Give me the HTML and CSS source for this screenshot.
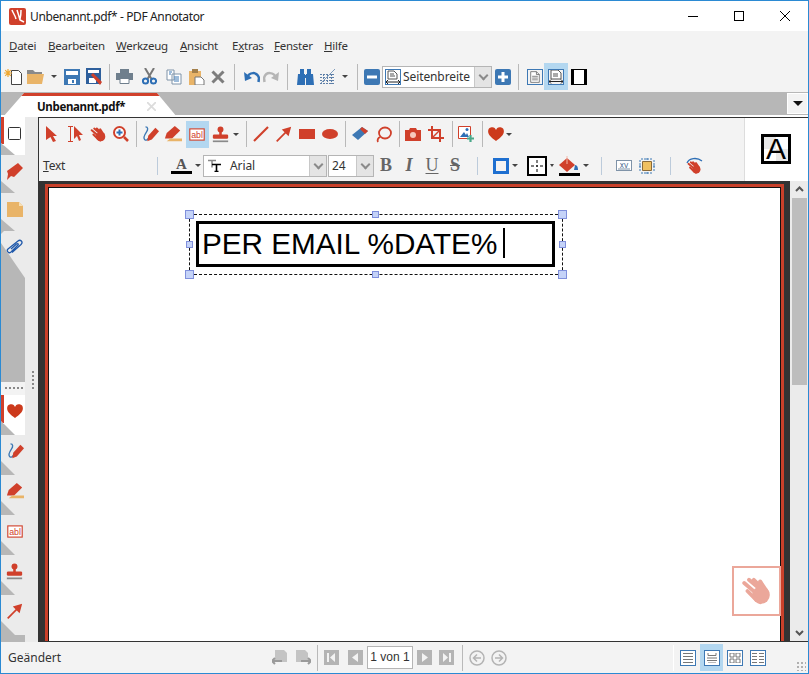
FILE: index.html
```html
<!DOCTYPE html>
<html lang="de">
<head>
  <meta charset="UTF-8">
  <title>Unbenannt.pdf* - PDF Annotator</title>
  <link rel="stylesheet" href="styles.css">
</head>
<body>
  <!-- Icons die mehrfach vorkommen -->
  <svg class="sprite" xmlns="http://www.w3.org/2000/svg">
    <symbol id="hand" viewBox="0 0 20 20">
      <g fill="none" stroke="currentColor" stroke-width="2.4" stroke-linecap="round">
        <path d="M2 5l7 6M5 3l7 6M8 3l6 6M12 4l4 6"/>
      </g>
      <circle cx="12.5" cy="12.5" r="5.5" fill="currentColor"/>
      <path d="M4 10l5 5 3 2" fill="none" stroke="currentColor" stroke-width="2.4" stroke-linecap="round"/>
    </symbol>
    <symbol id="pen" viewBox="0 0 20 20">
      <path d="M5 2c3 0 3 3 1 6s-4 6-2 8 3 0 4-1" fill="none" stroke="#3d78b4" stroke-width="1.5"/>
      <path d="M7 18l1-6 8-9 4 4-8 9z" fill="#d0402b"/>
    </symbol>
    <symbol id="marker" viewBox="0 0 20 20">
      <path d="M1 15l2-6 9-8 6 5-9 9z" fill="#d0402b"/>
      <path d="M7 15h13v3H3z" fill="#e9b468"/>
    </symbol>
    <symbol id="textbox" viewBox="0 0 20 16">
      <rect x="1" y="1" width="18" height="14" fill="#fff" stroke="#d0402b" stroke-width="1.4"/>
      <text x="10" y="12" text-anchor="middle" font-family="Liberation Sans, sans-serif" font-size="11" fill="#d0402b">abl</text>
    </symbol>
    <symbol id="stamp" viewBox="0 0 20 20">
      <circle cx="10" cy="4" r="3.500" fill="#d0402b"/>
      <path d="M8.500 6h3v5h-3z" fill="#d0402b"/>
      <rect x="1" y="10" width="18" height="5" rx="1.500" fill="#d0402b"/>
      <path d="M1 17h18v2H1z" fill="#8a8a8a"/>
    </symbol>
    <symbol id="arrowline" viewBox="0 0 20 20">
      <path d="M2 18L14 6" stroke="#d0402b" stroke-width="2"/>
      <path d="M19 1l-3 11-8-8z" fill="#d0402b"/>
    </symbol>
    <symbol id="heart" viewBox="0 0 18 16">
      <path d="M9 16C4 12 0 9 0 5a4.600 4.600 0 0 1 9-1.500A4.600 4.600 0 0 1 18 5c0 4-4 7-9 11z" fill="#cc3a1c"/>
    </symbol>
    <symbol id="pagelines" viewBox="0 0 14 16">
      <path d="M1 .5h8l4 4v11H1z" fill="#fff" stroke="#555"/>
      <path d="M9 .5v4h4M3 7h8M3 9.500h8M3 12h8" fill="none" stroke="#555"/>
    </symbol>
  </svg>

  <div class="window">
    <header class="titlebar">
      <svg class="applogo" width="17" height="17" viewBox="0 0 17 17">
        <rect width="17" height="17" rx="2" fill="#d0402b"/>
        <path d="M3 2c1 3 3 5 4 9M8 2c1 3 2 6 3 10l4 2M12 2c0 3 0 6-1 9" fill="none" stroke="#fff" stroke-width="1.500"/>
      </svg>
      <span class="apptitle">Unbenannt.pdf* - PDF Annotator</span>
      <div class="winbtn"><svg width="10" height="10" viewBox="0 0 10 10"><path d="M0 5.500h10" stroke="#000"/></svg></div>
      <div class="winbtn"><svg width="10" height="10" viewBox="0 0 10 10"><rect x=".5" y=".5" width="9" height="9" fill="none" stroke="#000"/></svg></div>
      <div class="winbtn"><svg width="10" height="10" viewBox="0 0 10 10"><path d="M0 0l10 10M10 0L0 10" stroke="#000"/></svg></div>
    </header>

    <nav class="menubar">
      <span><u>D</u>atei</span>
      <span><u>B</u>earbeiten</span>
      <span><u>W</u>erkzeug</span>
      <span><u>A</u>nsicht</span>
      <span>E<u>x</u>tras</span>
      <span><u>F</u>enster</span>
      <span><u>H</u>ilfe</span>
    </nav>

    <div class="toolbar">
      <svg width="18" height="16" viewBox="0 0 18 16"><path d="M7.500 1.500h7l3 3v11h-10z" fill="#fff" stroke="#444"/><path d="M4 0v8M0 4h8M1.200 1.200l5.600 5.600M6.800 1.200L1.200 6.800" stroke="#f0a830" stroke-width="1.200"/></svg>
      <svg width="17" height="14" viewBox="0 0 17 14"><path d="M0 0h6l2 2h7v3H0z" fill="#8a8a8a"/><path d="M0 4h17l-2 10H0z" fill="#e9b468"/></svg>
      <i class="caret"></i>
      <svg width="16" height="16" viewBox="0 0 16 16"><path d="M0 0h16v16H0z" fill="#3d78b4"/><path d="M2 2h12v4H2z" fill="#fff"/><path d="M4 10h8v5H4z" fill="#fff"/><path d="M8 11h2v3H8z" fill="#3d78b4"/></svg>
      <svg width="16" height="17" viewBox="0 0 16 17"><path d="M0 0h15v16H0z" fill="#2e5f9c"/><path d="M2 2h11v3H2z" fill="#fff"/><path d="M3 10h7v5H3z" fill="#fff"/><path d="M5 7l2-2 9 9-2 3z" fill="#d0402b"/></svg>
      <i class="sep"></i>
      <svg width="17" height="15" viewBox="0 0 17 15"><path d="M4 0h9v4H4z" fill="#6f7f8d"/><path d="M0 4h17v7H0z" fill="#6f7f8d"/><path d="M4 9.500h9v5H4z" fill="#fff" stroke="#6f7f8d"/></svg>
      <svg width="15" height="17" viewBox="0 0 15 17"><path d="M3 0l6.500 11M12 0L5.500 11" stroke="#777" stroke-width="2"/><circle cx="3.500" cy="13" r="2.600" fill="none" stroke="#2e6fb5" stroke-width="2"/><circle cx="11.500" cy="13" r="2.600" fill="none" stroke="#2e6fb5" stroke-width="2"/></svg>
      <svg width="16" height="16" viewBox="0 0 16 16"><path d="M1 1h7v10H1zM6 5h9v10H6z" fill="#fff" stroke="#7f93a8"/><path d="M3 3h3M3 5h2M8 8h5M8 10h5M8 12h5" stroke="#3d78b4"/></svg>
      <svg width="16" height="16" viewBox="0 0 16 16"><path d="M0 2h12v14H0z" fill="#e9b468"/><path d="M3 0h6v4H3z" fill="#a37f4a"/><path d="M6 8h6l3 3v5H6z" fill="#fff" stroke="#777"/></svg>
      <svg width="14" height="14" viewBox="0 0 14 14"><path d="M1.500 1.500l11 11M12.500 1.500l-11 11" stroke="#7d7d7d" stroke-width="3"/></svg>
      <i class="sep"></i>
      <svg width="16" height="12" viewBox="0 0 16 12"><path d="M3 7C5 1 13 0 15 7l-.5 4" fill="none" stroke="#2e6fb5" stroke-width="2.500"/><path d="M0 1l1 9 7-3z" fill="#2e6fb5"/></svg>
      <svg width="16" height="12" viewBox="0 0 16 12"><path d="M13 7C11 1 3 0 1 7l.5 4" fill="none" stroke="#b5b5b5" stroke-width="2.500"/><path d="M16 1l-1 9-7-3z" fill="#b5b5b5"/></svg>
      <i class="sep"></i>
      <svg width="17" height="16" viewBox="0 0 17 16"><path d="M3 0h4v5H3zM10 0h4v5h-4zM1 5h7v11H0zM9 5h7l1 11H9z" fill="#2e6fb5"/><path d="M7 6h3v3H7z" fill="#2e6fb5"/></svg>
      <svg width="17" height="17" viewBox="0 0 17 17"><path d="M1 6.500h14M1 9.500h14M1 12.500h14M1 15.500h14M4.500 6v10M8.500 6v10M12.500 6v10" stroke="#5d7fa8" stroke-dasharray="2 1"/><path d="M2 15L16 1" stroke="#7f9cbc"/></svg>
      <i class="caret"></i>
      <i class="sep"></i>
      <svg width="16" height="16" viewBox="0 0 16 16"><rect width="16" height="16" rx="2" fill="#3d78b4"/><path d="M3 6.500h10v3H3z" fill="#fff"/></svg>
      <div class="combo zoomcombo">
        <svg class="comboicon" width="16" height="16" viewBox="0 0 16 16"><rect x=".5" y=".5" width="15" height="15" fill="#fff" stroke="#3d78b4"/><path d="M3 2h6l3 3v5H3zM5 5h4M5 7h5" fill="none" stroke="#555"/><path d="M1 13h14M1 13l2-2M1 13l2 2M15 13l-2-2M15 13l-2 2" stroke="#222" fill="none"/></svg>
        <span class="combotext">Seitenbreite</span>
        <i class="dropdown"></i>
      </div>
      <svg width="16" height="16" viewBox="0 0 16 16"><rect width="16" height="16" rx="2" fill="#3d78b4"/><path d="M3 6.500h10v3H3zM6.500 3h3v10h-3z" fill="#fff"/></svg>
      <i class="sep"></i>
      <div class="pagebtn"><svg width="10" height="12"><use href="#pagelines"/></svg></div>
      <div class="activecell">
        <div class="pagebtn"><svg width="14" height="14" viewBox="0 0 14 14"><path d="M2 0h7l3 3v6H2zM4 4h5M4 6h5" fill="#fff" stroke="#555"/><path d="M0 11.500h14M0 11.500l2-2M0 11.500l2 2M14 11.500l-2-2M14 11.500l-2 2" fill="none" stroke="#222"/></svg></div>
      </div>
      <svg width="16" height="16" viewBox="0 0 16 16"><path d="M0 0h16v16H0z"/><path d="M3 1h10v14H3z" fill="#fff"/></svg>
    </div>

    <div class="tabstrip">
      <div class="doctab">
        <span class="tabname">Unbenannt.pdf*</span>
        <svg width="9" height="9" viewBox="0 0 9 9"><path d="M0 0l9 9M9 0L0 9" stroke="#dcdcdc" stroke-width="1.800"/></svg>
      </div>
      <div class="tabmenu"><i class="caret wide"></i></div>
    </div>

    <div class="workspace">
      <aside class="sidebar">
        <div class="sidetabs upper">
          <div class="sidetab active"><svg width="13" height="13" viewBox="0 0 13 13"><rect x=".5" y=".5" width="12" height="12" rx="1" fill="#fff" stroke="#333"/></svg></div>
          <div class="sidetab"><svg width="17" height="17" viewBox="0 0 17 17"><path d="M12 0l5 5-9 9-3-1-4 4 1-6-1-3z" fill="#d0402b"/></svg></div>
          <div class="sidetab"><svg width="16" height="15" viewBox="0 0 16 15"><path d="M0 0h12l4 4v11H0z" fill="#e9b468"/><path d="M12 0v4h4z" fill="#f6dfb5"/></svg></div>
          <div class="sidetab last"><svg width="17" height="15" viewBox="0 0 17 15"><path d="M6 13.500l9-8c2.500-2.500-.5-5.500-3-3.500L2 10c-2 2 .5 5 3 3l7-7c1-1-.5-2-1.500-1L5 10" fill="none" stroke="#2059ab" stroke-width="1.300"/></svg></div>
        </div>
        <div class="sidegrip"></div>
        <div class="sidetabs lower">
          <div class="sidetab active"><svg width="16" height="14"><use href="#heart"/></svg></div>
          <div class="sidetab"><svg width="18" height="18"><use href="#pen"/></svg></div>
          <div class="sidetab"><svg width="18" height="18"><use href="#marker"/></svg></div>
          <div class="sidetab"><svg width="16" height="13"><use href="#textbox"/></svg></div>
          <div class="sidetab"><svg width="17" height="17"><use href="#stamp"/></svg></div>
          <div class="sidetab"><svg width="17" height="17"><use href="#arrowline"/></svg></div>
        </div>
        <div class="vgrip"></div>
      </aside>

      <main class="content">
        <div class="ribbon">
          <div class="ribbonrows">
            <div class="toolrow">
              <svg width="13" height="16" viewBox="0 0 13 16"><path d="M1 0l11 10H8l3 5-3 1-2.500-5L1 14z" fill="#d0402b"/></svg>
              <svg width="16" height="16" viewBox="0 0 16 16"><path d="M0 .5h5M0 15.500h5M2.500 .5v15" fill="none" stroke="#d0402b"/><path d="M6 0l9 9h-4l2 5-2 1-2-5-3 3z" fill="#d0402b"/></svg>
              <svg class="redhand" width="17" height="17"><use href="#hand"/></svg>
              <svg width="16" height="16" viewBox="0 0 16 16"><circle cx="6.500" cy="6.500" r="5.500" fill="#fff" stroke="#d0402b" stroke-width="2"/><path d="M11 11l4 4" stroke="#d0402b" stroke-width="2.500"/><path d="M3.500 6.500h6M6.500 3.500v6" stroke="#2e6fb5" stroke-width="2"/></svg>
              <i class="sep"></i>
              <svg width="18" height="18"><use href="#pen"/></svg>
              <svg width="18" height="18"><use href="#marker"/></svg>
              <div class="activecell tall"><svg width="16" height="13"><use href="#textbox"/></svg></div>
              <svg width="17" height="17"><use href="#stamp"/></svg>
              <i class="caret"></i>
              <i class="sep"></i>
              <svg width="16" height="16" viewBox="0 0 16 16"><path d="M1 15L15 1" stroke="#d0402b" stroke-width="2.200"/></svg>
              <svg width="17" height="17"><use href="#arrowline"/></svg>
              <svg width="16" height="10" viewBox="0 0 16 10"><path d="M0 0h16v10H0z" fill="#d0402b"/></svg>
              <svg width="16" height="10" viewBox="0 0 16 10"><ellipse cx="8" cy="5" rx="8" ry="5" fill="#d0402b"/></svg>
              <i class="sep"></i>
              <svg width="16" height="14" viewBox="0 0 16 14"><path d="M0 8l10-8 6 4-10 9z" fill="#3d78b4"/><path d="M8 2l2-2 6 4-3 3z" fill="#d0402b"/></svg>
              <svg width="17" height="17" viewBox="0 0 17 17"><ellipse cx="10" cy="7" rx="6" ry="5.500" fill="none" stroke="#d0402b" stroke-width="1.800"/><path d="M5 11c-2 1-3 3-2 5" fill="none" stroke="#d0402b" stroke-width="1.800"/></svg>
              <i class="sep"></i>
              <svg width="16" height="13" viewBox="0 0 16 13"><path d="M0 2h4l1-2h6l1 2h4v11H0z" fill="#d0402b"/><circle cx="8" cy="7" r="3" fill="#f7c9bd"/></svg>
              <svg width="16" height="16" viewBox="0 0 16 16"><path d="M4 0v12h12M0 4h12v12" fill="none" stroke="#d0402b" stroke-width="2"/><path d="M12 4L4 12" stroke="#d0402b" stroke-width="1.500"/></svg>
              <i class="sep"></i>
              <svg width="16" height="16" viewBox="0 0 16 16"><path d="M.5.500h12v12H.5z" fill="#fff" stroke="#d0402b"/><path d="M2 11l4-5 2 3 1-2 2 4z" fill="#2e6fb5"/><circle cx="9" cy="3.500" r="1.500" fill="#2e6fb5"/><path d="M9 12.500h7M12.500 9v7" stroke="#4aa88a" stroke-width="2.200"/></svg>
              <i class="sep"></i>
              <svg width="16" height="14"><use href="#heart"/></svg>
              <i class="caret"></i>
            </div>
            <div class="stylerow">
              <span class="stylelabel"><u>T</u>ext</span>
              <i class="sep short"></i>
              <div class="drop">
                <svg width="21" height="18" viewBox="0 0 21 18"><text x="10.500" y="12" text-anchor="middle" font-family="Liberation Serif, serif" font-size="15" font-weight="bold" fill="#555">A</text><path d="M0 14h21v3H0z"/></svg>
                <i class="caret"></i>
              </div>
              <div class="combo fontcombo">
                <svg class="fonticon" width="14" height="13" viewBox="0 0 14 13"><path d="M0 1.500h8M4 1.500v7" fill="none" stroke="#888" stroke-width="1.500"/><path d="M4 5.500h9M8.500 5.500v7M6.500 12.500h4" fill="none" stroke="#000" stroke-width="1.600"/></svg>
                <span class="combotext">Arial</span>
                <i class="dropdown"></i>
              </div>
              <div class="combo sizecombo">
                <span class="combotext">24</span>
                <i class="dropdown"></i>
              </div>
              <span class="fmt bold">B</span>
              <span class="fmt italic">I</span>
              <span class="fmt under">U</span>
              <span class="fmt strike">S</span>
              <i class="sep short"></i>
              <div class="drop">
                <svg width="16" height="16" viewBox="0 0 16 16"><rect x="1.500" y="1.500" width="13" height="13" fill="none" stroke="#1e6fd0" stroke-width="3"/></svg>
                <i class="caret"></i>
              </div>
              <div class="drop">
                <svg width="20" height="20" viewBox="0 0 20 20"><rect x="1" y="1" width="18" height="18" fill="#fff" stroke="#000" stroke-width="2"/><path d="M10 4v3M10 9v2M10 13v3M4 10h3M9 10h2M13 10h3" stroke="#000"/></svg>
                <i class="caret small"></i>
              </div>
              <div class="drop">
                <svg width="21" height="20" viewBox="0 0 21 20"><path d="M0 9l8-7 8 7-8 7z" fill="#d0402b"/><path d="M16 9c3 0 3 4 3 5h-4z" fill="#2e6fb5"/><path d="M8 0v8" stroke="#f2b8aa"/><path d="M0 17h21v3H0z"/></svg>
                <i class="caret"></i>
              </div>
              <i class="sep short"></i>
              <svg width="16" height="11" viewBox="0 0 16 11"><rect x=".5" y=".5" width="15" height="10" fill="#fff" stroke="#7f93a8"/><text x="8" y="7.500" text-anchor="middle" font-family="Liberation Mono, monospace" font-size="7" fill="#3d5f8a">XV</text><path d="M2 9h12" stroke="#7f93a8"/></svg>
              <svg width="16" height="16" viewBox="0 0 16 16"><path d="M3.500 3.500h9v9h-9z" fill="#f0c060" stroke="#8a6a3a"/><path d="M8 0v2M8 14v2M0 8h2M14 8h2M2 1h12M2 15h12M1 2v12M15 2v12" stroke="#3d78b4" stroke-dasharray="2 1"/></svg>
              <i class="sep short"></i>
              <svg width="17" height="17" viewBox="0 0 17 17"><path d="M1 6c2-5 10-6 15-2" fill="none" stroke="#2e6fb5" stroke-width="1.300"/><g class="redhand"><use href="#hand" x="1" y="3" width="15" height="15" /></g></svg>
            </div>
          </div>
          <div class="stylepreview"><span class="previewbox">A</span></div>
        </div>

        <div class="viewer">
          <div class="pageframe">
            <div class="page">
              <!-- Markierung auf der Seite -->
              <div class="selection">
                <i class="handle tl"></i><i class="handle tc small"></i><i class="handle tr"></i>
                <i class="handle ml small"></i><i class="handle mr small"></i>
                <i class="handle bl"></i><i class="handle bc small"></i><i class="handle br"></i>
              </div>
              <div class="annotbox"><span>PER EMAIL %DATE%</span><i class="textcursor"></i></div>
            </div>
            <div class="handtool"><svg width="32" height="32"><use href="#hand"/></svg></div>
          </div>
          <div class="scrollbar">
            <svg class="scrollarrow" width="15" height="17" viewBox="0 0 15 17"><path d="M4 10l3.500-3.500L11 10" fill="none" stroke="#555" stroke-width="2"/></svg>
            <div class="scrolltrack"><div class="scrollthumb"></div></div>
            <svg class="scrollarrow" width="15" height="17" viewBox="0 0 15 17"><path d="M4 7l3.500 3.500L11 7" fill="none" stroke="#555" stroke-width="2"/></svg>
          </div>
        </div>
      </main>
    </div>

    <footer class="statusbar">
      <span class="statustext">Geändert</span>
      <span></span>
      <svg width="16" height="16" viewBox="0 0 16 16"><path d="M3 0h9l3 3v9H3z" fill="#c4c4c4"/><path d="M0 11h10M0 11l3-3M0 11l3 3" fill="none" stroke="#9a9a9a" stroke-width="2"/></svg>
      <svg width="16" height="16" viewBox="0 0 16 16"><path d="M1 0h9l3 3v9H1z" fill="#c4c4c4"/><path d="M16 11H6M16 11l-3-3M16 11l-3 3" fill="none" stroke="#9a9a9a" stroke-width="2"/></svg>
      <i class="sep"></i>
      <svg width="15" height="15" viewBox="0 0 15 15"><rect width="15" height="15" fill="#b4b4b4"/><path d="M3 3h2v9H3zM11 3v9L6 7.500z" fill="#f3f3f3"/></svg>
      <svg width="15" height="15" viewBox="0 0 15 15"><rect width="15" height="15" fill="#b4b4b4"/><path d="M10 3v9L4 7.500z" fill="#f3f3f3"/></svg>
      <div class="pagefield">1 von 1</div>
      <svg width="15" height="15" viewBox="0 0 15 15"><rect width="15" height="15" fill="#b4b4b4"/><path d="M5 3v9l6-4.500z" fill="#f3f3f3"/></svg>
      <svg width="15" height="15" viewBox="0 0 15 15"><rect width="15" height="15" fill="#b4b4b4"/><path d="M10 3h2v9h-2zM4 3v9l5-4.500z" fill="#f3f3f3"/></svg>
      <i class="sep"></i>
      <svg width="16" height="16" viewBox="0 0 16 16"><circle cx="8" cy="8" r="7" fill="none" stroke="#b4b4b4" stroke-width="1.500"/><path d="M12 8H4.500M8 4.500L4.500 8 8 11.500" fill="none" stroke="#b4b4b4" stroke-width="1.500"/></svg>
      <svg width="16" height="16" viewBox="0 0 16 16"><circle cx="8" cy="8" r="7" fill="none" stroke="#b4b4b4" stroke-width="1.500"/><path d="M4 8h7.500M8 4.500L11.500 8 8 11.500" fill="none" stroke="#b4b4b4" stroke-width="1.500"/></svg>
      <span></span>
      <i class="divider"></i>
      <div class="viewbtn"><svg width="10" height="10" viewBox="0 0 10 10"><path d="M0 .5h10M0 3.500h10M0 6.500h10M0 9.500h10" stroke="#777"/></svg></div>
      <div class="activecell status"><div class="viewbtn"><svg width="10" height="10" viewBox="0 0 10 10"><path d="M1 0v2.500h8V0M0 5h10M0 7.500h10M1 10h8" fill="none" stroke="#777"/></svg></div></div>
      <div class="viewbtn"><svg width="12" height="10" viewBox="0 0 12 10"><path d="M1 0h4v4H1zM7 0h4v4H7zM1 6h4v4H1zM7 6h4v4H7z" fill="none" stroke="#777"/></svg></div>
      <div class="viewbtn"><svg width="12" height="10" viewBox="0 0 12 10"><path d="M0 .5h5M0 3.500h5M0 6.500h5M0 9.500h5M7 .5h5M7 3.500h5M7 6.500h5M7 9.500h5" stroke="#777"/></svg></div>
      <div class="resizegrip"><i></i></div>
    </footer>
  </div>
</body>
</html>
```

FILE: styles.css
```css
/* Reset di base */
* {
  box-sizing: border-box;
  margin: 0;
  padding: 0;
}
html, body {
  width: 809px;
  height: 674px;
  overflow: hidden;
}
body {
  font-family: "Noto Sans", sans-serif;
  font-size: 11.5px;
  color: #333;
  background: #fff;
}
i {
  display: block;
  font-style: normal;
}
.sprite {
  display: none;
}
.window {
  width: 809px;
  height: 674px;
  border: 1px solid #2b8ad3;
  display: flex;
  flex-direction: column;
  background: #f3f3f3;
}

/* Titelleiste */
.titlebar {
  height: 30px;
  background: #fff;
  display: flex;
  align-items: center;
  padding-left: 8px;
  flex-shrink: 0;
}
.apptitle {
  margin-left: 4px;
  flex: 1;
  font-size: 12px;
  letter-spacing: -0.37px;
  color: #222;
}
.winbtn {
  width: 46px;
  display: flex;
  justify-content: center;
}

/* Menue */
.menubar {
  height: 30px;
  display: grid;
  grid-template-columns: 39px 68px 64px 52px 42px 50px auto;
  align-items: center;
  padding: 0 0 2px 8px;
  letter-spacing: -0.25px;
  flex-shrink: 0;
}

/* Werkzeugleiste oben */
.toolbar {
  height: 31px;
  display: grid;
  grid-template-columns: 24px 21px 16px 20px 24px 6px 25px 25px 23px 23px 19px 15px 19px 19px 15px 21px 22px 13px 12px 17px 115px 16px 14px 19px 24px 22px;
  align-items: center;
  justify-items: center;
  flex-shrink: 0;
}
.sep {
  width: 1px;
  height: 26px;
  background: #b9b9b9;
}
.sep.short {
  height: 18px;
  background: #bccbdb;
}
.caret {
  width: 0;
  height: 0;
  border-left: 3.5px solid transparent;
  border-right: 3.5px solid transparent;
  border-top: 3.5px solid #444;
}
.caret.small {
  border-left-width: 2px;
  border-right-width: 2px;
  border-top-width: 3px;
}
.caret.wide {
  border-left-width: 5px;
  border-right-width: 5px;
  border-top-width: 5px;
  border-top-color: #111;
}
.activecell {
  width: 24px;
  height: 27px;
  background: #b3d7f0;
  display: flex;
  align-items: center;
  justify-content: center;
}
.activecell.tall {
  width: 23px;
  height: 27px;
}
.activecell.status {
  width: 23px;
  height: 27px;
}
.pagebtn {
  width: 16px;
  height: 16px;
  border: 1px solid #3d78b4;
  background: #f3f3f3;
  display: flex;
  align-items: center;
  justify-content: center;
}

/* Auswahlfelder */
.combo {
  height: 22px;
  background: #fff;
  border: 1px solid #b5b5b5;
  display: flex;
  align-items: center;
}
.zoomcombo {
  width: 110px;
  justify-self: end;
  margin-right: 3px;
}
.comboicon {
  margin: 0 2px 0 2px;
}
.combotext {
  flex: 1;
  font-size: 12px;
  letter-spacing: -0.1px;
  color: #333;
}
.dropdown {
  width: 17px;
  height: 100%;
  background: #e4e4e4;
  border-left: 1px solid #c8c8c8;
  position: relative;
}
.dropdown::after {
  content: "";
  position: absolute;
  left: 5px;
  top: 5px;
  width: 5px;
  height: 5px;
  border-right: 2px solid #8a8a8a;
  border-bottom: 2px solid #8a8a8a;
  transform: rotate(45deg);
}

/* Reiter */
.tabstrip {
  height: 25px;
  background: #b7b7b7;
  border-bottom: 2px solid #fff;
  display: flex;
  justify-content: space-between;
  padding: 1px 0 0 2px;
  flex-shrink: 0;
}
.doctab {
  width: 174px;
  height: 24px;
  margin-bottom: -2px;
  background: #fff;
  border-top: 3px solid #d0402b;
  clip-path: polygon(0 100%, 21px 0, 154px 0, 174px 100%);
  display: flex;
  align-items: center;
  padding-left: 34px;
}
.tabname {
  width: 110px;
  font-weight: bold;
  font-size: 11.5px;
  letter-spacing: -0.35px;
  color: #111;
}
.tabmenu {
  width: 21px;
  height: 21px;
  background: #f3f3f3;
  border: 1px solid #fff;
  display: flex;
  align-items: center;
  justify-content: center;
}

/* Arbeitsbereich */
.workspace {
  flex: 1;
  min-height: 0;
  display: flex;
}
.sidebar {
  width: 37px;
  background: #ebebeb;
  position: relative;
  display: flex;
  flex-direction: column;
}
.sidetabs {
  width: 24px;
  background: #b7b7b7;
  display: flex;
  flex-direction: column;
}
.sidetabs.upper {
  height: 265px;
}
.sidegrip {
  height: 13px;
  width: 24px;
  background: #f3f3f3;
  position: relative;
}
.sidegrip::after {
  content: "";
  position: absolute;
  left: 4px;
  top: 5px;
  width: 18px;
  height: 2px;
  background: repeating-linear-gradient(to right, #888 0 2px, transparent 2px 4px);
}
.vgrip {
  position: absolute;
  left: 31px;
  top: 254px;
  width: 2px;
  height: 18px;
  background: repeating-linear-gradient(to bottom, #888 0 2px, transparent 2px 4px);
}
.sidetabs.lower {
  flex: 1;
}
.sidetab {
  width: 24px;
  height: 38px;
  background: #ebebeb;
  display: flex;
  align-items: center;
  justify-content: center;
  padding: 0 0 6px 3px;
  clip-path: polygon(0 0, 100% 0, 100% 100%, 14px 100%, 0 26px);
}
.sidetab.last {
  height: 47px;
  align-items: flex-start;
  padding-top: 8px;
  clip-path: polygon(3px 0, 100% 0, 100% 100%, 0 12px, 0 3px);
}
.sidetab.active {
  background: #fff;
  border-left: 3px solid #d0402b;
  border-image: linear-gradient(to bottom, #d0402b 70%, #fff 70%) 1;
  padding-left: 0;
}
.sidetabs.lower .sidetab {
  height: 40px;
  padding-bottom: 8px;
}

/* Inhalt rechts */
.content {
  flex: 1;
  min-width: 0;
  display: flex;
  flex-direction: column;
  border-top: 1px solid #333;
  border-left: 1px solid #333;
}
.ribbon {
  height: 63px;
  display: flex;
  flex-shrink: 0;
}
.ribbonrows {
  width: 705px;
  display: flex;
  flex-direction: column;
}
.toolrow {
  height: 32px;
  display: grid;
  grid-template-columns: 25px 23px 23px 22px 8px 20px 26px 22px 24px 8px 12px 18px 26px 22px 24px 6px 24px 22px 10px 18px 28px 4px 24px 8px 20px 6px;
  align-items: center;
  justify-items: center;
}
.redhand {
  color: #d0402b;
}
.stylerow {
  height: 31px;
  display: grid;
  grid-template-columns: 103px 30px 27px 128px 47px 24px 22px 24px 22px 22px 34px 36px 32px 22px 24px 22px 24px 24px;
  align-items: center;
  justify-items: center;
}
.stylelabel {
  justify-self: start;
  padding-left: 4px;
  font-size: 12px;
  letter-spacing: -0.2px;
}
.drop {
  display: flex;
  align-items: center;
  gap: 3px;
}
.fontcombo {
  width: 124px;
  justify-self: end;
}
.fonticon {
  margin: 0 8px 0 4px;
}
.sizecombo {
  width: 46px;
  justify-self: end;
  padding-left: 3px;
}
.fmt {
  font-family: "Liberation Serif", serif;
  font-size: 18px;
  font-weight: bold;
  color: #666;
}
.italic {
  font-style: italic;
}
.under {
  text-decoration: underline;
  text-underline-offset: 2px;
  font-weight: normal;
}
.strike {
  text-decoration: line-through;
}
.stylepreview {
  flex: 1;
  background: #fff;
  border-left: 1px solid #ddd;
  display: flex;
  align-items: center;
  padding: 0 0 1px 16px;
}
.previewbox {
  width: 30px;
  height: 30px;
  border: 3px solid #000;
  background: conic-gradient(#fff 25%, #e8e8e8 0 50%, #fff 0 75%, #e8e8e8 0);
  font-family: "Liberation Sans", sans-serif;
  font-size: 30px;
  line-height: 24px;
  text-align: center;
  color: #000;
}

/* Seitenansicht */
.viewer {
  flex: 1;
  min-height: 0;
  display: flex;
  border-bottom: 1px solid #333;
}
.pageframe {
  flex: 1;
  min-width: 0;
  background: #333;
  padding: 3px 6px 0 6px;
  position: relative;
}
.page {
  height: 100%;
  background: #fff;
  border: solid #c9402a;
  border-width: 3px 3px 0 3px;
  position: relative;
  box-shadow: inset 1px 1px 0 #111, inset -1px 0 0 #111;
}
.selection {
  position: absolute;
  left: 141px;
  top: 27px;
  width: 374px;
  height: 61px;
  border: 1px dashed #111;
}
.handle {
  position: absolute;
  width: 9px;
  height: 9px;
  background: #c5d3f8;
  border: 1px solid #8090dc;
}
.handle.small {
  width: 7px;
  height: 7px;
}
.tl { left: -5px; top: -5px; }
.tr { right: -5px; top: -5px; }
.bl { left: -5px; bottom: -5px; }
.br { right: -5px; bottom: -5px; }
.tc { left: 182px; top: -4px; }
.bc { left: 182px; bottom: -4px; }
.ml { left: -4px; top: 26px; }
.mr { right: -4px; top: 26px; }
.annotbox {
  position: absolute;
  left: 148px;
  top: 34px;
  width: 359px;
  height: 46px;
  border: 3px solid #000;
  padding-left: 3px;
  display: flex;
  align-items: center;
  font-family: "Liberation Sans", sans-serif;
  font-size: 29.700px;
  color: #000;
  white-space: nowrap;
}
.textcursor {
  width: 2px;
  height: 30px;
  background: #000;
  margin: 0 0 3px 6px;
}
.handtool {
  position: absolute;
  right: 9px;
  bottom: 25px;
  width: 49px;
  height: 50px;
  border: 2px solid #eba79a;
  background: #fff;
  color: #eba79a;
  display: flex;
  align-items: center;
  justify-content: center;
}
.scrollbar {
  width: 18px;
  background: #ebebeb;
  display: flex;
  flex-direction: column;
  align-items: center;
}
.scrolltrack {
  flex: 1;
  width: 15px;
}
.scrollthumb {
  height: 187px;
  background: #bdbdbd;
}

/* Statusleiste */
.statusbar {
  height: 31px;
  display: grid;
  grid-template-columns: 99px 168px 23px 23px 6px 23px 24px 46px 22px 23px 8px 21px 24px 1fr 3px 25px 23px 23px 23px 39px;
  align-items: center;
  justify-items: center;
  flex-shrink: 0;
}
.statustext {
  justify-self: start;
  padding-left: 7px;
  font-size: 12px;
}
.pagefield {
  width: 46px;
  height: 23px;
  background: #fff;
  border: 1px solid #b5b5b5;
  font-family: "Liberation Sans", sans-serif;
  font-size: 12px;
  line-height: 21px;
  text-align: center;
}
.divider {
  width: 1px;
  height: 26px;
  background: #fff;
}
.viewbtn {
  width: 16px;
  height: 16px;
  background: #fff;
  border: 1px solid #3d78b4;
  display: flex;
  align-items: center;
  justify-content: center;
}
.resizegrip {
  align-self: end;
  justify-self: end;
  width: 10px;
  height: 10px;
  margin: 0 2px 2px 0;
  background: radial-gradient(circle, #b0b0b0 1.2px, transparent 1.3px) 0 0 / 4px 4px;
}
```
